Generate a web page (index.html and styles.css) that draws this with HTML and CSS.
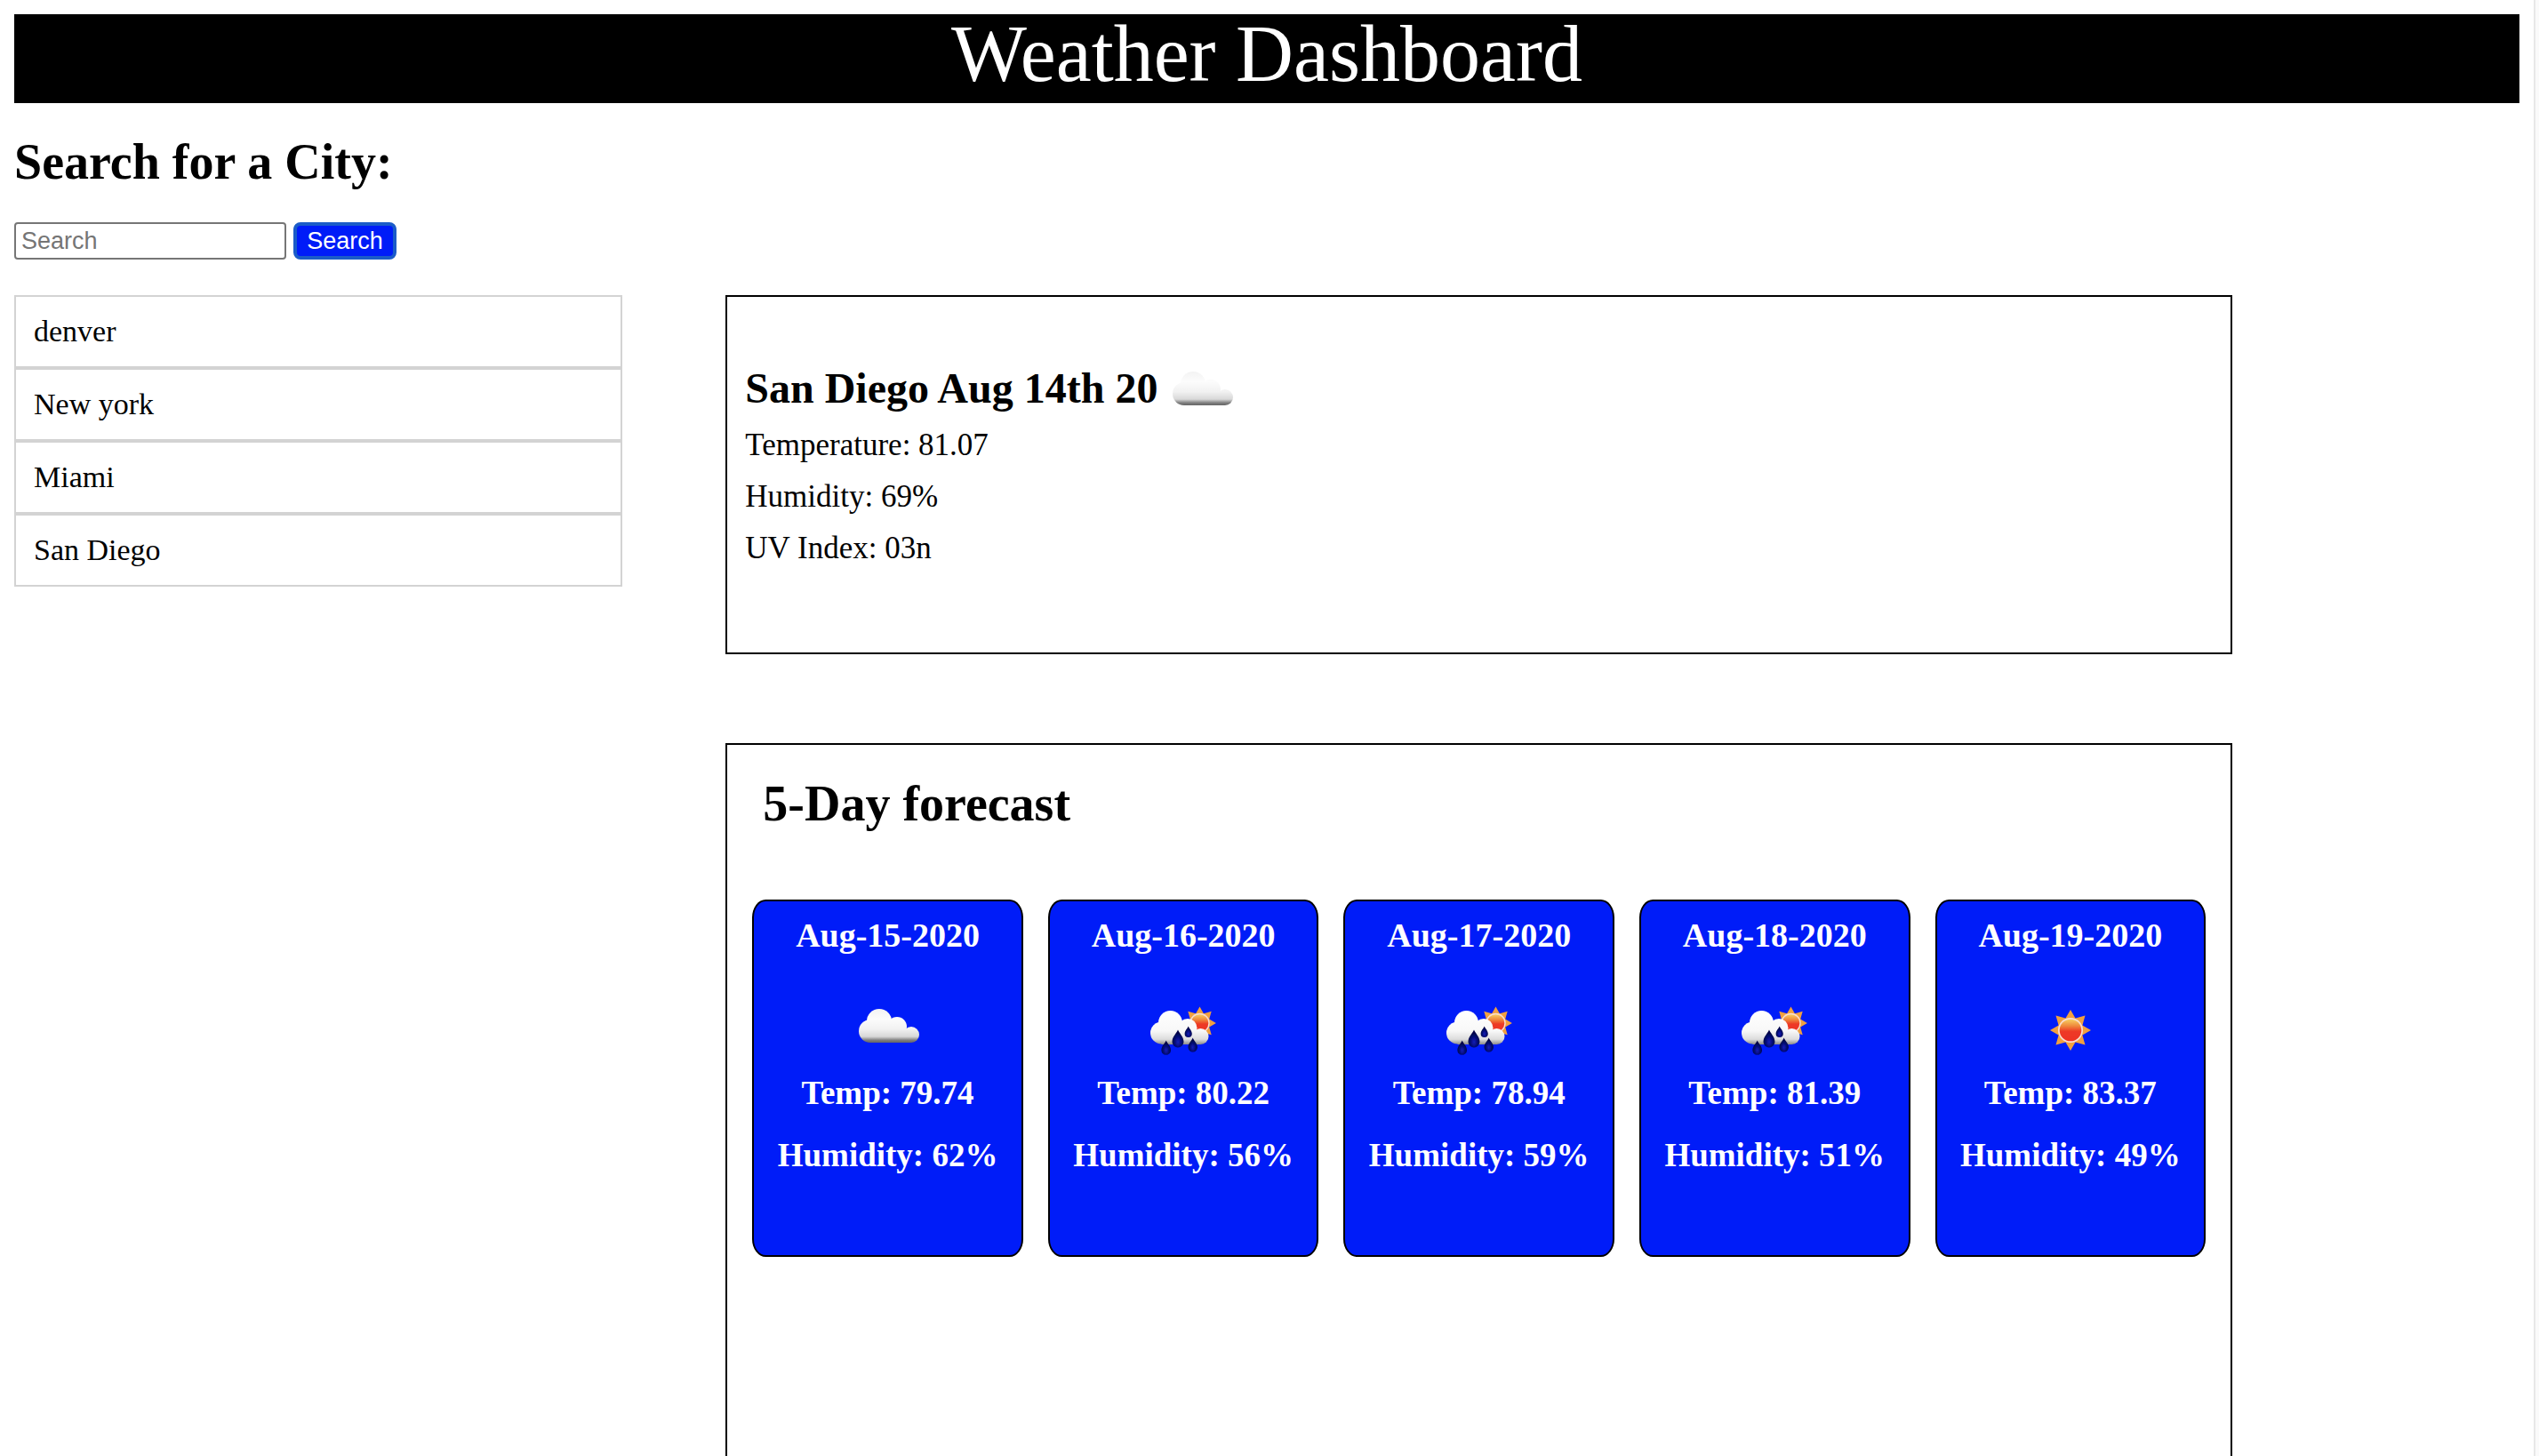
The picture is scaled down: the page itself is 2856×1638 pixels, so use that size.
FILE: index.html
```html
<!DOCTYPE html>
<html lang="en">
<head>
<meta charset="utf-8">
<meta name="viewport" content="width=device-width, initial-scale=1">
<title>Weather Dashboard</title>
<link rel="stylesheet" href="styles.css">
</head>
<body>
<svg class="defs" width="0" height="0" aria-hidden="true">
  <defs>
    <linearGradient id="cloud-fill" gradientUnits="userSpaceOnUse" x1="0" y1="26" x2="0" y2="64">
      <stop offset="0" stop-color="#f3f3f3"/>
      <stop offset=".3" stop-color="#fcfcfc"/>
      <stop offset=".6" stop-color="#f1f1f1"/>
      <stop offset=".82" stop-color="#d8d8d8"/>
      <stop offset=".93" stop-color="#7c7c7c"/>
      <stop offset="1" stop-color="#666666"/>
    </linearGradient>
    <linearGradient id="rain-cloud-fill" gradientUnits="userSpaceOnUse" x1="0" y1="28" x2="0" y2="66">
      <stop offset="0" stop-color="#ffffff"/>
      <stop offset=".6" stop-color="#f8f8f8"/>
      <stop offset=".85" stop-color="#dcdcdc"/>
      <stop offset="1" stop-color="#8a8a8a"/>
    </linearGradient>
    <linearGradient id="sun-fill" x1="0" y1="0" x2="0" y2="1">
      <stop offset="0" stop-color="#f7cf62"/>
      <stop offset=".3" stop-color="#ef8a3c"/>
      <stop offset=".55" stop-color="#ed3a26"/>
      <stop offset="1" stop-color="#ee3324"/>
    </linearGradient>
    <radialGradient id="drop-fill" cx=".5" cy=".68" r=".5">
      <stop offset="0" stop-color="#1420b8"/>
      <stop offset=".5" stop-color="#060c80"/>
      <stop offset="1" stop-color="#020548"/>
    </radialGradient>
    <filter id="soft" x="-10%" y="-10%" width="120%" height="120%">
      <feGaussianBlur stdDeviation=".7"/>
    </filter>
    <g id="sun-shape">
      <path fill="#f0a040" d="M23 0 13.4 5.5 16.5 16.5 5.5 13.4 0 23-5.5 13.4-16.5 16.5-13.4 5.5-23 0-13.4-5.5-16.5-16.5-5.5-13.4 0-23 5.5-13.4 16.5-16.5 13.4-5.5Z"/>
      <circle r="14" fill="#f8ddd2"/>
      <circle r="12.3" fill="url(#sun-fill)"/>
    </g>
    <path id="drop" d="M0 0C1.5 4 6 7 6 12.500A6 6 0 0 1-6 12.500C-6 7-1.500 4 0 0Z" fill="url(#drop-fill)"/>
    <symbol id="cloud" viewBox="0 0 100 90">
      <g filter="url(#soft)" fill="url(#cloud-fill)">
        <circle cx="30" cy="51" r="13"/>
        <circle cx="40" cy="40" r="14"/>
        <circle cx="60" cy="46" r="11"/>
        <circle cx="76" cy="55" r="9"/>
        <path d="M30 44H66L76 54V64H30Z"/>
      </g>
    </symbol>
    <symbol id="cloud-cropped" viewBox="10 20 80 50">
      <g filter="url(#soft)" fill="url(#cloud-fill)">
        <circle cx="30" cy="51" r="13"/>
        <circle cx="40" cy="40" r="14"/>
        <circle cx="60" cy="46" r="11"/>
        <circle cx="76" cy="55" r="9"/>
        <path d="M30 44H66L76 54V64H30Z"/>
      </g>
    </symbol>
    <symbol id="rain" viewBox="0 0 100 90">
      <g filter="url(#soft)">
        <use href="#sun-shape" transform="translate(68.500 42) scale(.8)"/>
        <g fill="url(#rain-cloud-fill)">
          <circle cx="25.500" cy="53" r="12.500"/>
          <circle cx="35.500" cy="41.500" r="13.500"/>
          <circle cx="55" cy="47.500" r="10.500"/>
          <circle cx="69.500" cy="57" r="9"/>
          <path d="M25.500 44H60L69.500 57V66H25.500Z"/>
        </g>
        <use href="#drop" transform="translate(55.700 45.500) scale(.68)"/>
        <use href="#drop" transform="translate(44 49.500) scale(1.080)"/>
        <use href="#drop" transform="translate(30.700 61.500) scale(.88)"/>
        <use href="#drop" transform="translate(60.700 58.500) scale(.86)"/>
      </g>
    </symbol>
    <symbol id="sun" viewBox="0 0 100 90">
      <g filter="url(#soft)"><use href="#sun-shape" transform="translate(50 50)"/></g>
    </symbol>
  </defs>
</svg>

<div class="page">
  <h1 class="banner">Weather Dashboard</h1>

  <form class="search" onsubmit="return false">
    <h2 class="section-title"><label for="city">Search for a City:</label></h2>
    <div class="search-row">
      <input class="search-input" id="city" type="text" placeholder="Search">
      <button class="search-button" type="submit">Search</button>
    </div>
  </form>

  <main class="content">
    <ul class="history">
      <li class="history-item">denver</li>
      <li class="history-item">New york</li>
      <li class="history-item">Miami</li>
      <li class="history-item">San Diego</li>
    </ul>

    <div class="results">
      <section class="current">
        <h3 class="current-title">San Diego Aug 14th 20
          <svg class="current-icon" role="img" aria-label="Cloudy"><use href="#cloud-cropped"/></svg>
        </h3>
        <p class="detail">Temperature: 81.07</p>
        <p class="detail">Humidity: 69%</p>
        <p class="detail">UV Index: 03n</p>
      </section>

      <section class="forecast">
        <h2 class="section-title forecast-title">5-Day forecast</h2>
        <div class="days">
          <article class="day">
            <h4 class="day-text day-date">Aug-15-2020</h4>
            <svg class="day-icon" role="img" aria-label="Cloudy"><use href="#cloud"/></svg>
            <p class="day-text">Temp: 79.74</p>
            <p class="day-text day-humidity">Humidity: 62%</p>
          </article>
          <article class="day">
            <h4 class="day-text day-date">Aug-16-2020</h4>
            <svg class="day-icon" role="img" aria-label="Rain"><use href="#rain"/></svg>
            <p class="day-text">Temp: 80.22</p>
            <p class="day-text day-humidity">Humidity: 56%</p>
          </article>
          <article class="day">
            <h4 class="day-text day-date">Aug-17-2020</h4>
            <svg class="day-icon" role="img" aria-label="Rain"><use href="#rain"/></svg>
            <p class="day-text">Temp: 78.94</p>
            <p class="day-text day-humidity">Humidity: 59%</p>
          </article>
          <article class="day">
            <h4 class="day-text day-date">Aug-18-2020</h4>
            <svg class="day-icon" role="img" aria-label="Rain"><use href="#rain"/></svg>
            <p class="day-text">Temp: 81.39</p>
            <p class="day-text day-humidity">Humidity: 51%</p>
          </article>
          <article class="day">
            <h4 class="day-text day-date">Aug-19-2020</h4>
            <svg class="day-icon" role="img" aria-label="Sunny"><use href="#sun"/></svg>
            <p class="day-text">Temp: 83.37</p>
            <p class="day-text day-humidity">Humidity: 49%</p>
          </article>
        </div>
      </section>
    </div>
  </main>
</div>
</body>
</html>
```
FILE: styles.css
```css
* {
  box-sizing: border-box;
}

body {
  margin: 0;
  border-right: 4px solid #fafafa;
  background: #ffffff;
  color: #000000;
  font-family: Georgia, "Liberation Serif", serif;
}

h1, h2, h3, h4, p, ul {
  margin: 0;
  padding: 0;
}

.defs {
  position: absolute;
}

.page {
  display: flex;
  flex-direction: column;
  min-height: 100vh;
  padding: 16px 16px 0;
  border-right: 2px solid #e8e8e8;
}

.banner {
  padding-bottom: 10px;
  background: #000000;
  color: #ffffff;
  font-size: 90px;
  font-weight: 400;
  line-height: 90px;
  text-align: center;
}

.section-title {
  font-size: 56px;
  line-height: 64px;
}

.search {
  margin: 34px 0 40px;
}

.search-row {
  display: flex;
  gap: 8px;
  margin-top: 36px;
}

.search-input,
.search-button {
  height: 42px;
  font-family: Arial, "Liberation Sans", sans-serif;
  font-size: 27px;
}

.search-input {
  width: 306px;
  padding: 0 6px;
  border: 2px solid #767676;
  border-radius: 4px;
  background: #ffffff;
}

.search-input::placeholder {
  color: #757575;
}

.search-button {
  width: 116px;
  padding: 0;
  border: 4px solid #1b5cc8;
  border-radius: 8px;
  background: #001cf8;
  color: #ffffff;
  line-height: 34px;
}

.content {
  display: flex;
  flex: 1;
  gap: 116px;
}

.history {
  flex: 0 0 calc(24% + 8px);
  list-style: none;
}

.history-item {
  padding: 20px;
  border: 2px solid #d3d3d3;
  font-size: 34px;
  line-height: 38px;
}

.results {
  display: flex;
  flex: 0 0 calc(60% + 4px);
  flex-direction: column;
  gap: 100px;
}

.current {
  padding: 76px 20px 88px;
  border: 2px solid #000000;
}

.current-title {
  display: flex;
  align-items: center;
  gap: 10px;
  margin-bottom: 8px;
  font-size: 48px;
  line-height: 54px;
}

.current-icon {
  width: 80px;
  height: 50px;
}

.detail {
  font-size: 35px;
  line-height: 58px;
}

.forecast {
  flex: 1;
  padding: 34px 28px 0;
  border: 2px solid #000000;
  border-bottom: 0;
}

.forecast-title {
  padding-left: 12px;
}

.days {
  display: grid;
  grid-template-columns: repeat(5, 1fr);
  gap: 28px;
  margin-top: 76px;
}

.day {
  display: flex;
  flex-direction: column;
  align-items: center;
  padding: 16px 0 90px;
  border: 2px solid #000000;
  border-radius: 5%;
  background: #001cf8;
  color: #ffffff;
}

.day-text {
  font-size: 37px;
  font-weight: 700;
  line-height: 44px;
}

.day-date {
  font-size: 38px;
}

.day-icon {
  width: 100px;
  height: 90px;
  margin: 35px 0 9px;
}

.day-humidity {
  margin-top: 26px;
}
```
